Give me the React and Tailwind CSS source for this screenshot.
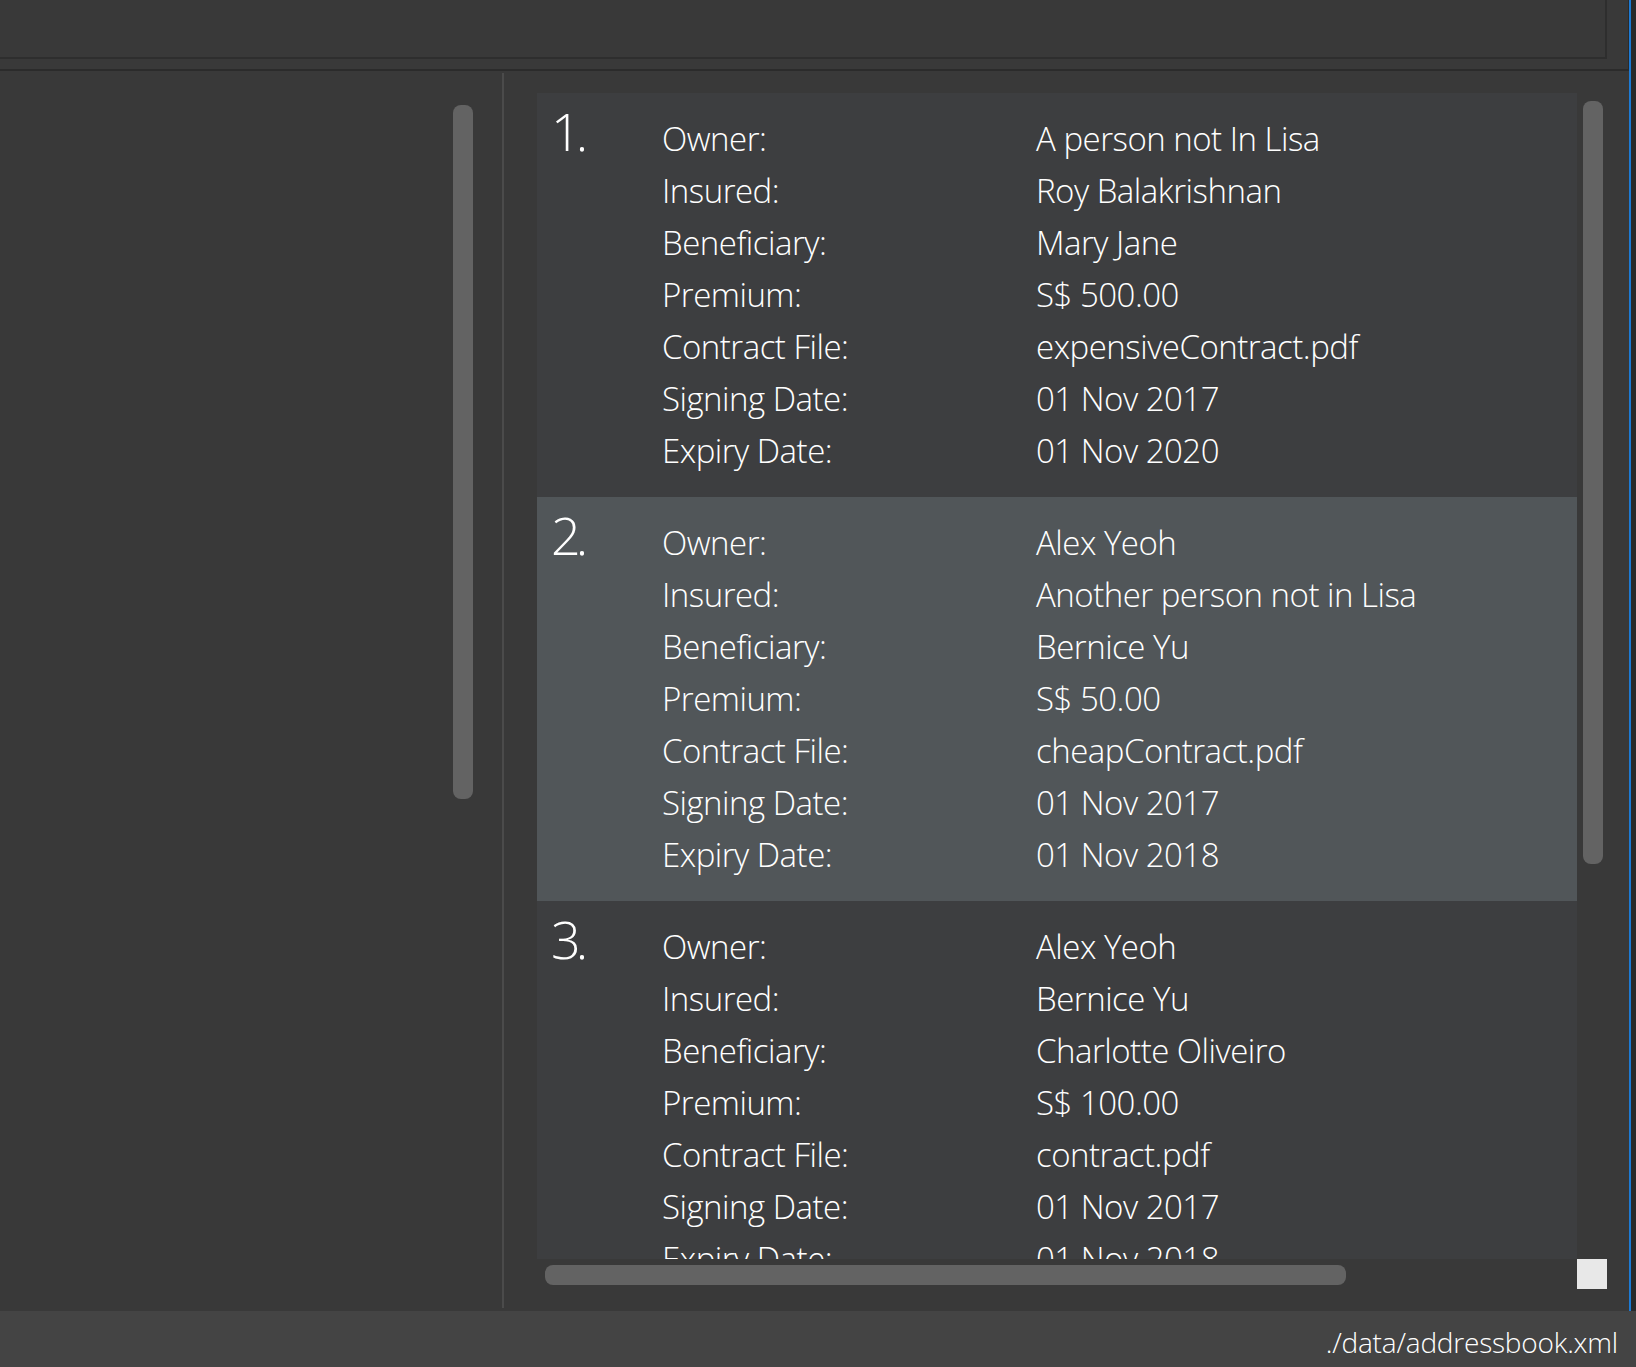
import React from "react";

const policies = [
  {
    n: "1.",
    bg: "bg-[#3d3e40]",
    rows: [
      ["Owner:", "A person not In Lisa"],
      ["Insured:", "Roy Balakrishnan"],
      ["Beneficiary:", "Mary Jane"],
      ["Premium:", "S$ 500.00"],
      ["Contract File:", "expensiveContract.pdf"],
      ["Signing Date:", "01 Nov 2017"],
      ["Expiry Date:", "01 Nov 2020"],
    ],
  },
  {
    n: "2.",
    bg: "bg-[#515659]",
    rows: [
      ["Owner:", "Alex Yeoh"],
      ["Insured:", "Another person not in Lisa"],
      ["Beneficiary:", "Bernice Yu"],
      ["Premium:", "S$ 50.00"],
      ["Contract File:", "cheapContract.pdf"],
      ["Signing Date:", "01 Nov 2017"],
      ["Expiry Date:", "01 Nov 2018"],
    ],
  },
  {
    n: "3.",
    bg: "bg-[#3d3e40]",
    rows: [
      ["Owner:", "Alex Yeoh"],
      ["Insured:", "Bernice Yu"],
      ["Beneficiary:", "Charlotte Oliveiro"],
      ["Premium:", "S$ 100.00"],
      ["Contract File:", "contract.pdf"],
      ["Signing Date:", "01 Nov 2017"],
      ["Expiry Date:", "01 Nov 2018"],
    ],
  },
];

function Card({ p }) {
  return (
    <div className={`${p.bg} h-[404px] w-[1040px] shrink-0 flex pl-[18px] pt-[20px]`}>
      <div className="w-[107px] shrink-0 -ml-[4px] pr-[-4px] text-[52px] leading-[52px] -mt-[8px] font-light tracking-[-5px]">
        {p.n}
      </div>
      <div className="flex flex-col ml-[4px]">
        {p.rows.map(([k, v]) => (
          <div key={k} className="flex h-[52px] items-center text-[33px] leading-[52px] font-light tracking-[-0.5px]">
            <div className="w-[374px] shrink-0">{k}</div>
            <div className="whitespace-nowrap">{v}</div>
          </div>
        ))}
      </div>
    </div>
  );
}

export default function App() {
  return (
    <div
      className="w-[1636px] h-[1367px] flex flex-col bg-[#393939] overflow-hidden text-white"
      style={{ fontFamily: '"Open Sans", "Noto Sans", sans-serif' }}
    >
      <div className="flex h-[1311px]">
        <div className="w-[1629px] flex flex-col">
          <div className="h-[71px] shrink-0 border-b-2 border-r border-[#2b2b2b]">
            <div className="h-[59px] w-[1607px] border-b-2 border-r-2 border-[#2e2e2e]" />
          </div>
          <div className="flex-1 flex">
            <div className="w-[502px] shrink-0 flex justify-end pr-[29px] pt-[34px]">
              <div className="w-[20px] h-[694px] rounded-[8px] bg-[#636363]" />
            </div>
            <div className="w-[2px] bg-[#4b4b4b] mt-[2px] mb-[3px]" />
            <div className="flex-1 pl-[33px] pt-[22px]">
              <div className="flex">
                <div className="w-[1040px] h-[1166px] overflow-hidden flex flex-col">
                  {policies.map((p) => (
                    <Card key={p.n} p={p} />
                  ))}
                </div>
                <div className="w-[30px] pl-[6px] pt-[8px]">
                  <div className="w-[20px] h-[763px] rounded-[8px] bg-[#636363]" />
                </div>
              </div>
              <div className="flex">
                <div className="w-[1040px] h-[30px] pl-[8px] pt-[6px]">
                  <div className="w-[801px] h-[20px] rounded-[8px] bg-[#636363]" />
                </div>
                <div className="w-[30px] h-[30px] bg-[#e8e8e8]" />
              </div>
            </div>
          </div>
        </div>
        <div className="w-[7px] flex">
          <div className="w-[2px] bg-[#1d7ad4]" />
          <div className="flex-1 bg-[#2a2a2c]" />
        </div>
      </div>
      <div className="h-[56px] bg-[#444444] flex justify-end items-start pr-[18px] pt-[11px]">
        <span className="text-[28px] leading-[40px] font-light tracking-[-0.2px]">./data/addressbook.xml</span>
      </div>
    </div>
  );
}
